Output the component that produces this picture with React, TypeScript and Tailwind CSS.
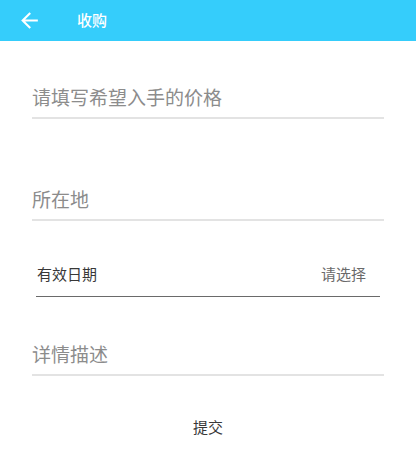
const cjk = { fontFamily: '"Noto Sans CJK SC", "Noto Sans", sans-serif' };

function BackArrow() {
  return (
    <svg viewBox="0 0 24 24" className="h-[25px] w-[25px]" fill="#ffffff">
      <path d="M20 11H7.83l5.59-5.59L12 4l-8 8 8 8 1.41-1.41L7.83 13H20v-2z" />
    </svg>
  );
}

function Field({ label, className }: { label: string; className: string }) {
  return (
    <div className={`mx-[32px] border-b-[2px] border-[#e3e3e3] pb-[7px] ${className}`}>
      <span className="block text-[19px] leading-[26px] text-[#8c8c8c]">{label}</span>
    </div>
  );
}

export default function App() {
  return (
    <div className="h-[450px] w-[416px] bg-white" style={cjk}>
      <header className="flex h-[41px] items-center bg-[#35cdfb]">
        <div className="ml-[17px] flex items-center">
          <BackArrow />
        </div>
        <span className="ml-[35px] text-[15px] font-medium text-white">收购</span>
      </header>

      <Field label="请填写希望入手的价格" className="mt-[43px]" />
      <Field label="所在地" className="mt-[67px]" />

      <div className="mx-[36px] mt-[41px] flex items-center justify-between border-b-[1.5px] border-[#6a6a6a] pb-[10px]">
        <span className="pl-px text-[15px] leading-[24px] text-[#383838]">有效日期</span>
        <span className="pr-[14px] text-[15px] leading-[24px] text-[#6a6a6a]">请选择</span>
      </div>

      <Field label="详情描述" className="mt-[44px]" />

      <div className="mt-[41px] text-center text-[15px] leading-[20px] text-[#383838]">提交</div>
    </div>
  );
}
